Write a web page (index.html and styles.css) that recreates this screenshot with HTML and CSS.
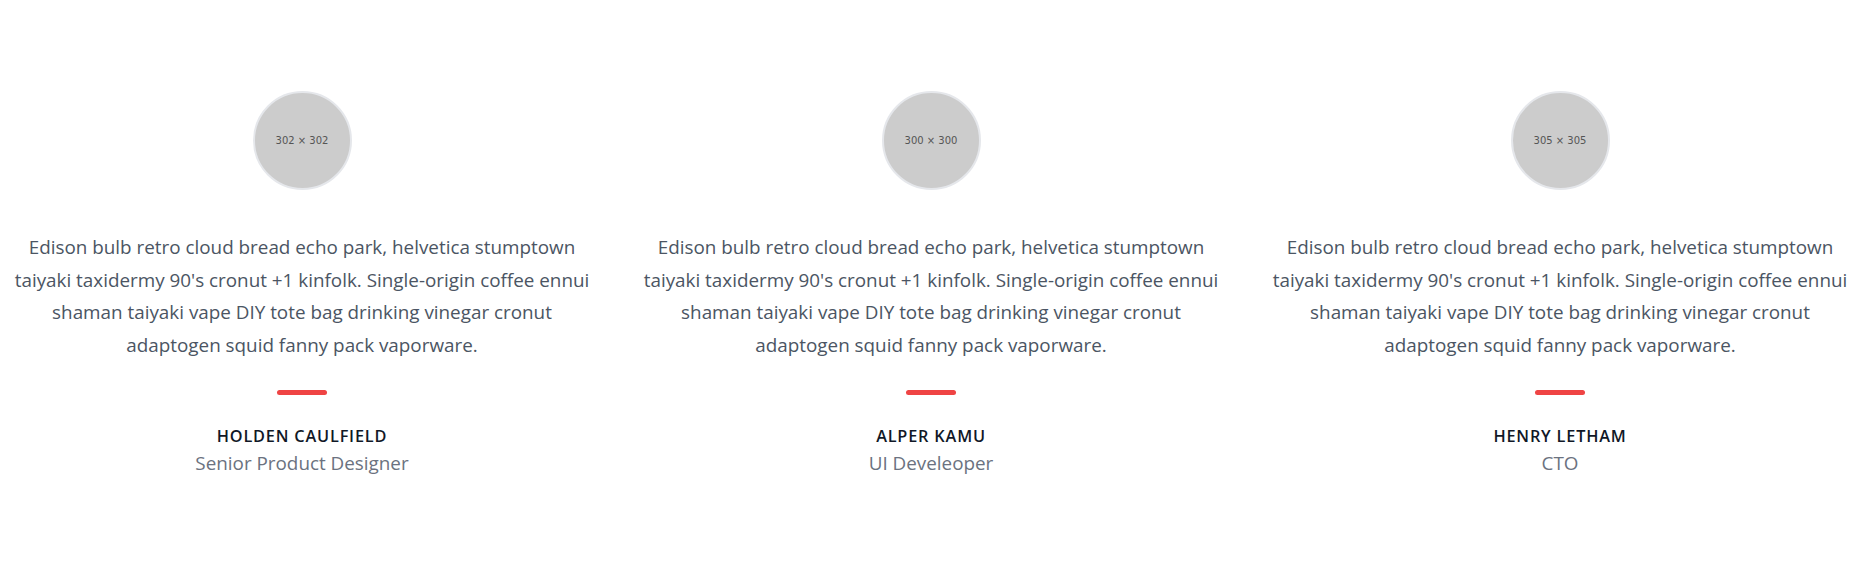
FILE: index.html
```
<!DOCTYPE html>
<html lang="en">
<head>
<meta charset="utf-8">
<title>Testimonials</title>
<link rel="stylesheet" href="styles.css">
</head>
<body>
<section class="testimonials">
  <div class="row">
    <div class="col">
      <div class="avatar">302 × 302</div>
      <p class="quote">Edison bulb retro cloud bread echo park, helvetica stumptown taiyaki taxidermy 90's cronut +1 kinfolk. Single-origin coffee ennui shaman taiyaki vape DIY tote bag drinking vinegar cronut adaptogen squid fanny pack vaporware.</p>
      <span class="bar"></span>
      <h2 class="name">HOLDEN CAULFIELD</h2>
      <p class="role">Senior Product Designer</p>
    </div>
    <div class="col">
      <div class="avatar">300 × 300</div>
      <p class="quote">Edison bulb retro cloud bread echo park, helvetica stumptown taiyaki taxidermy 90's cronut +1 kinfolk. Single-origin coffee ennui shaman taiyaki vape DIY tote bag drinking vinegar cronut adaptogen squid fanny pack vaporware.</p>
      <span class="bar"></span>
      <h2 class="name">ALPER KAMU</h2>
      <p class="role">UI Develeoper</p>
    </div>
    <div class="col">
      <div class="avatar">305 × 305</div>
      <p class="quote">Edison bulb retro cloud bread echo park, helvetica stumptown taiyaki taxidermy 90's cronut +1 kinfolk. Single-origin coffee ennui shaman taiyaki vape DIY tote bag drinking vinegar cronut adaptogen squid fanny pack vaporware.</p>
      <span class="bar"></span>
      <h2 class="name">HENRY LETHAM</h2>
      <p class="role">CTO</p>
    </div>
  </div>
</section>
</body>
</html>
```
FILE: styles.css
```
html, body {
  margin: 0;
  padding: 0;
  background: #ffffff;
  overflow: hidden;
}

body {
  font-family: "Open Sans", "Noto Sans", sans-serif;
  color: #4b5563;
}

.testimonials {
  padding-top: 91px;
}

.row {
  display: flex;
  justify-content: center;
}

.col {
  flex: 0 0 629px;
  box-sizing: border-box;
  padding: 0 20px;
  display: flex;
  flex-direction: column;
  align-items: center;
  text-align: center;
}

.avatar {
  width: 99px;
  height: 99px;
  box-sizing: border-box;
  border-radius: 50%;
  border: 2.5px solid #e5e7eb;
  background: #cccccc;
  display: flex;
  align-items: center;
  justify-content: center;
  font-family: "DejaVu Sans", sans-serif;
  font-size: 10px;
  color: #555555;
}

.quote {
  margin: 41px 0 0;
  font-size: 18.85px;
  line-height: 32.5px;
  color: #4b5563;
}

.bar {
  display: block;
  width: 50px;
  height: 5px;
  border-radius: 3px;
  background: #ef4444;
  margin-top: 29px;
}

.name {
  margin: 29px 0 0;
  font-size: 16.3px;
  line-height: 25px;
  font-weight: 600;
  letter-spacing: 0.05em;
  color: #111827;
}

.role {
  margin: -1px 0 0;
  font-size: 18.85px;
  line-height: 30px;
  color: #6b7280;
}
```
